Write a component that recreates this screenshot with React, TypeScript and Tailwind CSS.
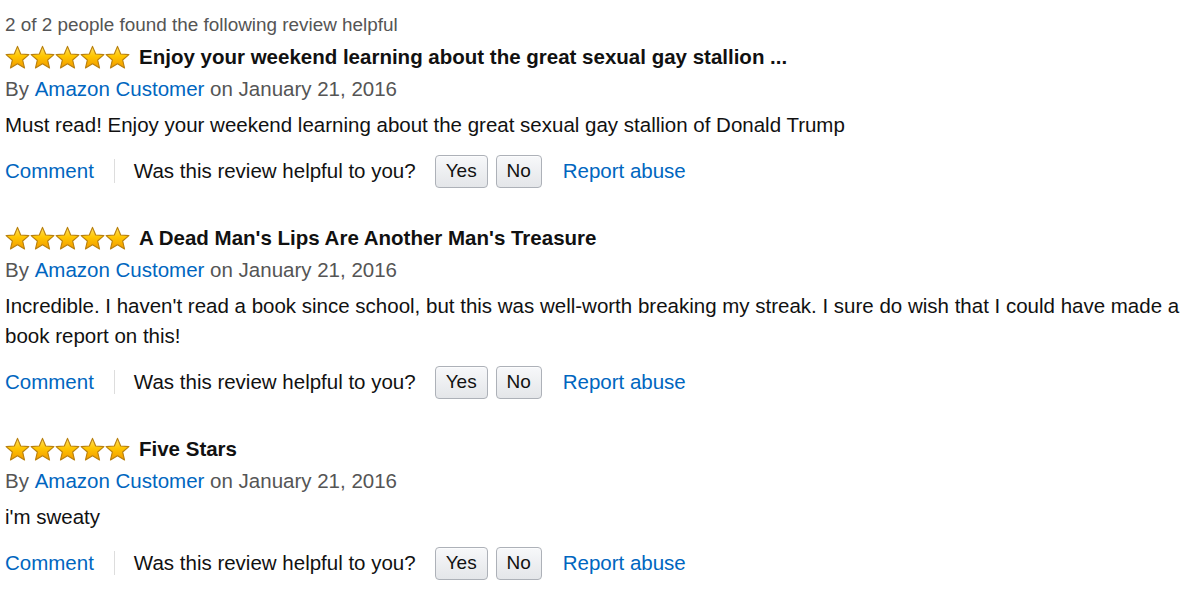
import React from "react";

function Star() {
  return (
    <svg width="25" height="25" viewBox="0 0 24 24" className="block">
      <defs>
        <linearGradient id="sg" x1="0" y1="0" x2="0" y2="1">
          <stop offset="0" stopColor="#FFE066" />
          <stop offset="0.45" stopColor="#FFC600" />
          <stop offset="1" stopColor="#F29A00" />
        </linearGradient>
      </defs>
      <path
        d="M12 1.3L15.06 8.59L22.94 9.25L16.95 14.41L18.76 22.1L12 18L5.24 22.1L7.05 14.41L1.06 9.25L8.94 8.59Z"
        fill="url(#sg)"
        stroke="#B9800E"
        strokeWidth="1.1"
        strokeLinejoin="round"
      />
    </svg>
  );
}

function Stars() {
  return (
    <div className="flex">
      {[0, 1, 2, 3, 4].map((i) => (
        <Star key={i} />
      ))}
    </div>
  );
}

function Btn({ children, w }: { children: React.ReactNode; w: string }) {
  return (
    <div
      className={`${w} h-[33px] flex items-center justify-center rounded-[4px] border border-[#adb1b8] bg-gradient-to-b from-[#f7f8fa] to-[#e4e6e9] text-[19px] text-[#111] shadow-[inset_0_1px_0_rgba(255,255,255,0.6)]`}
    >
      {children}
    </div>
  );
}

function Review({
  title,
  body,
}: {
  title: string;
  body: React.ReactNode;
}) {
  return (
    <div>
      <div className="h-[32px] flex items-center gap-[9px]">
        <Stars />
        <div className="font-bold text-[20.5px] text-[#111]">{title}</div>
      </div>
      <div className="h-[32px] flex items-center text-[20.5px] text-[#555]">
        <span>By&nbsp;</span>
        <span className="text-[#0066c0]">Amazon Customer</span>
        <span>&nbsp;on January 21, 2016</span>
      </div>
      <div className="pt-[5px] text-[20.5px] leading-[30px] text-[#111]">{body}</div>
      <div className="mt-[14px] h-[34px] flex items-center text-[20.5px]">
        <span className="text-[#0066c0]">Comment</span>
        <div className="ml-[20px] mr-[19px] w-px h-[24px] bg-[#ddd]" />
        <span className="text-[#111]">Was this review helpful to you?</span>
        <div className="ml-[19px] flex gap-[8px]">
          <Btn w="w-[53px]">Yes</Btn>
          <Btn w="w-[46px]">No</Btn>
        </div>
        <span className="ml-[21px] text-[#0066c0]">Report abuse</span>
      </div>
    </div>
  );
}

export default function App() {
  return (
    <div
      className="w-[1200px] h-[605px] bg-white pl-[5px] pr-[10px] pt-[11px] overflow-hidden"
      style={{ fontFamily: '"Liberation Sans", Arial, sans-serif' }}
    >
      <div className="h-[28px] flex items-center text-[18.9px] text-[#555]">
        2 of 2 people found the following review helpful
      </div>
      <div className="mt-[2px] flex flex-col gap-[34px]">
        <Review
          title="Enjoy your weekend learning about the great sexual gay stallion ..."
          body="Must read! Enjoy your weekend learning about the great sexual gay stallion of Donald Trump"
        />
        <Review
          title="A Dead Man's Lips Are Another Man's Treasure"
          body="Incredible. I haven't read a book since school, but this was well-worth breaking my streak. I sure do wish that I could have made a book report on this!"
        />
        <Review title="Five Stars" body="i'm sweaty" />
      </div>
    </div>
  );
}
